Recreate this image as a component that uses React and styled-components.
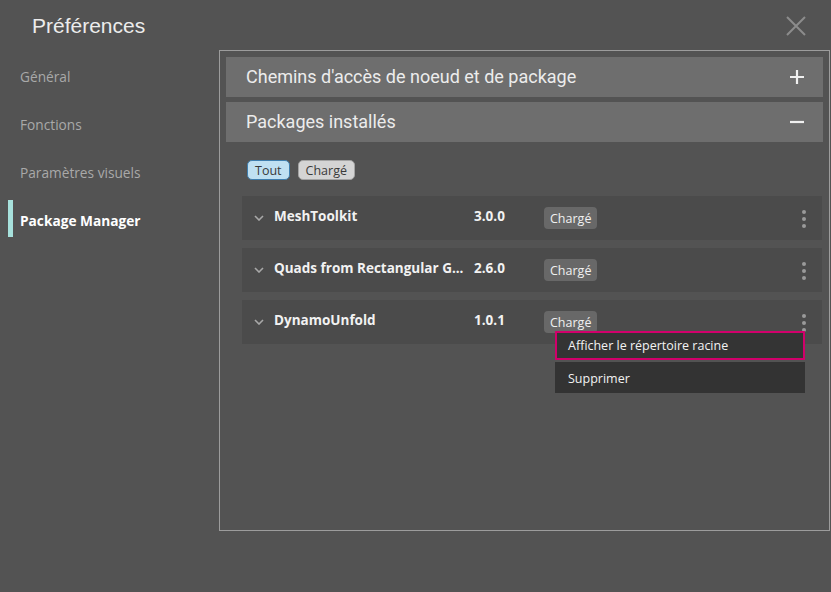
import React from 'react';
import styled, { createGlobalStyle } from 'styled-components';

const GlobalStyle = createGlobalStyle`
    html, body {
        margin: 0;
        padding: 0;
        background: #535353;
    }
    body {
        font-family: "Open Sans", "Noto Sans", sans-serif;
        color: #e6e6e6;
    }
`;

const Page = styled.div`
    width: 831px;
    height: 592px;
    background: #535353;
    display: flex;
    flex-direction: column;
`;

const Header = styled.div`
    height: 50px;
    display: flex;
    align-items: center;
    justify-content: space-between;
    padding: 0 24px 0 32px;
    box-sizing: border-box;
`;

const Title = styled.h1`
    margin: 0;
    margin-top: 1px;
    font-family: "Liberation Sans", Arial, sans-serif;
    font-weight: 400;
    font-size: 21px;
    color: #ececec;
`;

const CloseButton = styled.button`
    border: none;
    background: none;
    padding: 0;
    width: 22px;
    height: 22px;
    margin-top: 1px;
    display: flex;
    align-items: center;
    justify-content: center;
`;

const Body = styled.div`
    display: flex;
`;

const Sidebar = styled.nav`
    width: 219px;
    padding-top: 2px;
    display: flex;
    flex-direction: column;
`;

const NavItem = styled.div`
    position: relative;
    height: 48px;
    display: flex;
    align-items: center;
    padding-left: 20px;
    font-size: 13.7px;
    font-weight: ${p => (p.active ? 700 : 400)};
    color: ${p => (p.active ? '#ffffff' : '#a9a9a9')};

    &::before {
        content: '';
        display: ${p => (p.active ? 'block' : 'none')};
        position: absolute;
        left: 8px;
        top: 4px;
        width: 5px;
        height: 37px;
        background: #a7e1dc;
    }
`;

const Panel = styled.section`
    width: 611px;
    height: 481px;
    box-sizing: border-box;
    border: 1px solid #9c9c9c;
    padding: 6px;
    display: flex;
    flex-direction: column;
    gap: 5px;
`;

const SectionHeader = styled.div`
    height: 40px;
    box-sizing: border-box;
    padding: 0 18px 2px 20px;
    background: #6e6e6e;
    display: flex;
    align-items: center;
    justify-content: space-between;
    font-family: Roboto, "Noto Sans", sans-serif;
    font-size: 18px;
    color: #ececec;

    svg {
        margin-top: 2px;
    }
`;

const SectionBody = styled.div`
    padding: 13px 1px 0 16px;
    display: flex;
    flex-direction: column;
`;

const Filters = styled.div`
    display: flex;
    gap: 8px;
    padding-left: 5px;
    margin-bottom: 16px;
`;

const Chip = styled.span`
    height: 20px;
    box-sizing: border-box;
    padding: 0 7px;
    display: inline-flex;
    align-items: center;
    border-radius: 5px;
    font-size: 12.5px;
    color: #3a3a3a;
    background: ${p => (p.selected ? '#bfe0f2' : '#d4d4d4')};
    border: 1px solid ${p => (p.selected ? '#3f7eae' : '#a3a3a3')};
`;

const PackageList = styled.div`
    display: flex;
    flex-direction: column;
    gap: 8px;
`;

const Row = styled.div`
    position: relative;
    height: 44px;
    background: #4b4b4b;
    display: grid;
    grid-template-columns: 32px 200px 70px 1fr 36px;
    align-items: center;
`;

const Chevron = styled.span`
    display: flex;
    justify-content: center;
    padding-left: 1px;
`;

const Name = styled.span`
    font-size: 13.5px;
    font-weight: 700;
    color: #f2f2f2;
    white-space: nowrap;
    margin-top: -4px;
`;

const Version = styled(Name)``;

const Badge = styled.span`
    justify-self: start;
    height: 22px;
    padding: 0 6px;
    display: inline-flex;
    align-items: center;
    border-radius: 4px;
    background: #686868;
    font-size: 12.5px;
    color: #f0f0f0;
`;

const Kebab = styled.span`
    display: flex;
    flex-direction: column;
    align-items: center;
    gap: 3px;
    margin-top: 1px;

    i {
        width: 4px;
        height: 4px;
        border-radius: 50%;
        background: #9a9a9a;
    }
`;

const Menu = styled.div`
    position: absolute;
    left: 313px;
    top: 31px;
    width: 250px;
    display: flex;
    flex-direction: column;
    gap: 2px;
    z-index: 2;
`;

const MenuItem = styled.div`
    height: ${p => (p.focused ? '29px' : '31px')};
    box-sizing: border-box;
    display: flex;
    align-items: center;
    padding-left: ${p => (p.focused ? '11px' : '13px')};
    padding-top: ${p => (p.focused ? '0' : '2px')};
    background: ${p => (p.focused ? '#343434' : '#333333')};
    border: ${p => (p.focused ? '2px solid #d1006b' : 'none')};
    font-size: 12.5px;
    color: #f2f2f2;
`;

const packages = [
    { name: 'MeshToolkit', version: '3.0.0' },
    { name: 'Quads from Rectangular G...', version: '2.6.0' },
    { name: 'DynamoUnfold', version: '1.0.1', menu: true },
];

const navItems = ['Général', 'Fonctions', 'Paramètres visuels', 'Package Manager'];

function Plus() {
    return (
        <svg width="16" height="16" viewBox="0 0 16 16">
            <path d="M8 1v14M1 8h14" stroke="#f0f0f0" strokeWidth="2.2" />
        </svg>
    );
}

function Minus() {
    return (
        <svg width="16" height="16" viewBox="0 0 16 16">
            <path d="M1 8h14" stroke="#f0f0f0" strokeWidth="2.2" />
        </svg>
    );
}

function App() {
    return (
        <Page>
            <GlobalStyle />
            <Header>
                <Title>Préférences</Title>
                <CloseButton>
                    <svg width="20" height="20" viewBox="0 0 20 20">
                        <path d="M1 1l18 18M19 1L1 19" stroke="#8c8c8c" strokeWidth="2" />
                    </svg>
                </CloseButton>
            </Header>
            <Body>
                <Sidebar>
                    {navItems.map((item, i) => (
                        <NavItem key={item} active={i === 3}>{item}</NavItem>
                    ))}
                </Sidebar>
                <Panel>
                    <SectionHeader>
                        Chemins d'accès de noeud et de package
                        <Plus />
                    </SectionHeader>
                    <SectionHeader>
                        Packages installés
                        <Minus />
                    </SectionHeader>
                    <SectionBody>
                        <Filters>
                            <Chip selected>Tout</Chip>
                            <Chip>Chargé</Chip>
                        </Filters>
                        <PackageList>
                            {packages.map(pkg => (
                                <Row key={pkg.name}>
                                    <Chevron>
                                        <svg width="10" height="6" viewBox="0 0 10 6">
                                            <path d="M1 1l4 4 4-4" stroke="#a8a8a8" strokeWidth="1.6" fill="none" />
                                        </svg>
                                    </Chevron>
                                    <Name>{pkg.name}</Name>
                                    <Version>{pkg.version}</Version>
                                    <Badge>Chargé</Badge>
                                    <Kebab><i /><i /><i /></Kebab>
                                    {pkg.menu && (
                                        <Menu>
                                            <MenuItem focused>Afficher le répertoire racine</MenuItem>
                                            <MenuItem>Supprimer</MenuItem>
                                        </Menu>
                                    )}
                                </Row>
                            ))}
                        </PackageList>
                    </SectionBody>
                </Panel>
            </Body>
        </Page>
    );
}

export default App
